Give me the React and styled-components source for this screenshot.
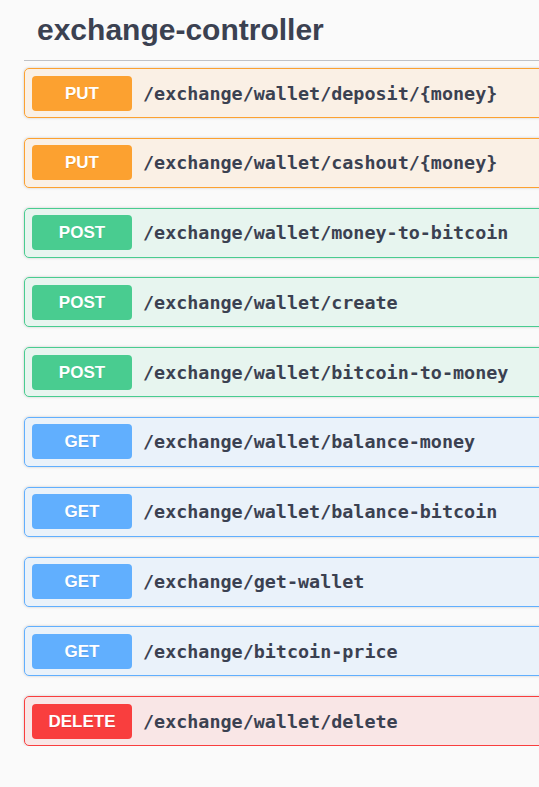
import styled, { createGlobalStyle } from 'styled-components';

const GlobalStyle = createGlobalStyle`
    body {
        margin: 0;
        background: #fafafa;
        overflow: hidden;
    }
`

const methods = {
    PUT: '252, 161, 48',
    POST: '73, 204, 144',
    GET: '97, 175, 254',
    DELETE: '249, 62, 62',
}

const Page = styled.div`
    width: 600px;
    padding: 0 0 0 24px;
    font-family: "Liberation Sans", Arial, sans-serif;
`

const TagTitle = styled.h4`
    margin: 0;
    padding: 10px 0 10px 13px;
    height: 40px;
    border-bottom: 1px solid rgba(59, 65, 81, 0.3);
    font-size: 30px;
    line-height: 40px;
    font-weight: 700;
    color: #3b4151;
`

const BlockList = styled.div`
    display: flex;
    flex-direction: column;
    gap: 19.8px;
    padding-top: 7px;
`

const OpBlock = styled.div`
    display: flex;
    align-items: center;
    gap: 11px;
    height: 48px;
    padding: 0 7px;
    border: 1px solid rgb(${p => p.$rgb});
    border-radius: 5px;
    background: rgba(${p => p.$rgb}, 0.1);
    box-shadow: 0 0 3px rgba(0, 0, 0, 0.19);
`

const Method = styled.span`
    width: 100px;
    height: 35px;
    border-radius: 4px;
    background: rgb(${p => p.$rgb});
    color: #fff;
    font-size: 17px;
    font-weight: 700;
    line-height: 35px;
    text-align: center;
    text-shadow: 0 1px 0 rgba(0, 0, 0, 0.1);
`

const Path = styled.span`
    font-family: "DejaVu Sans Mono", monospace;
    font-size: 18.4px;
    font-weight: 700;
    color: #3b4151;
`

const endpoints = [
    ['PUT', '/exchange/wallet/deposit/{money}'],
    ['PUT', '/exchange/wallet/cashout/{money}'],
    ['POST', '/exchange/wallet/money-to-bitcoin'],
    ['POST', '/exchange/wallet/create'],
    ['POST', '/exchange/wallet/bitcoin-to-money'],
    ['GET', '/exchange/wallet/balance-money'],
    ['GET', '/exchange/wallet/balance-bitcoin'],
    ['GET', '/exchange/get-wallet'],
    ['GET', '/exchange/bitcoin-price'],
    ['DELETE', '/exchange/wallet/delete'],
]

function App() {
    return (
        <Page>
            <GlobalStyle />
            <TagTitle>exchange-controller</TagTitle>
            <BlockList>
                {endpoints.map(([method, path]) => (
                    <OpBlock key={method + path} $rgb={methods[method]}>
                        <Method $rgb={methods[method]}>{method}</Method>
                        <Path>{path}</Path>
                    </OpBlock>
                ))}
            </BlockList>
        </Page>
    );
}

export default App;
